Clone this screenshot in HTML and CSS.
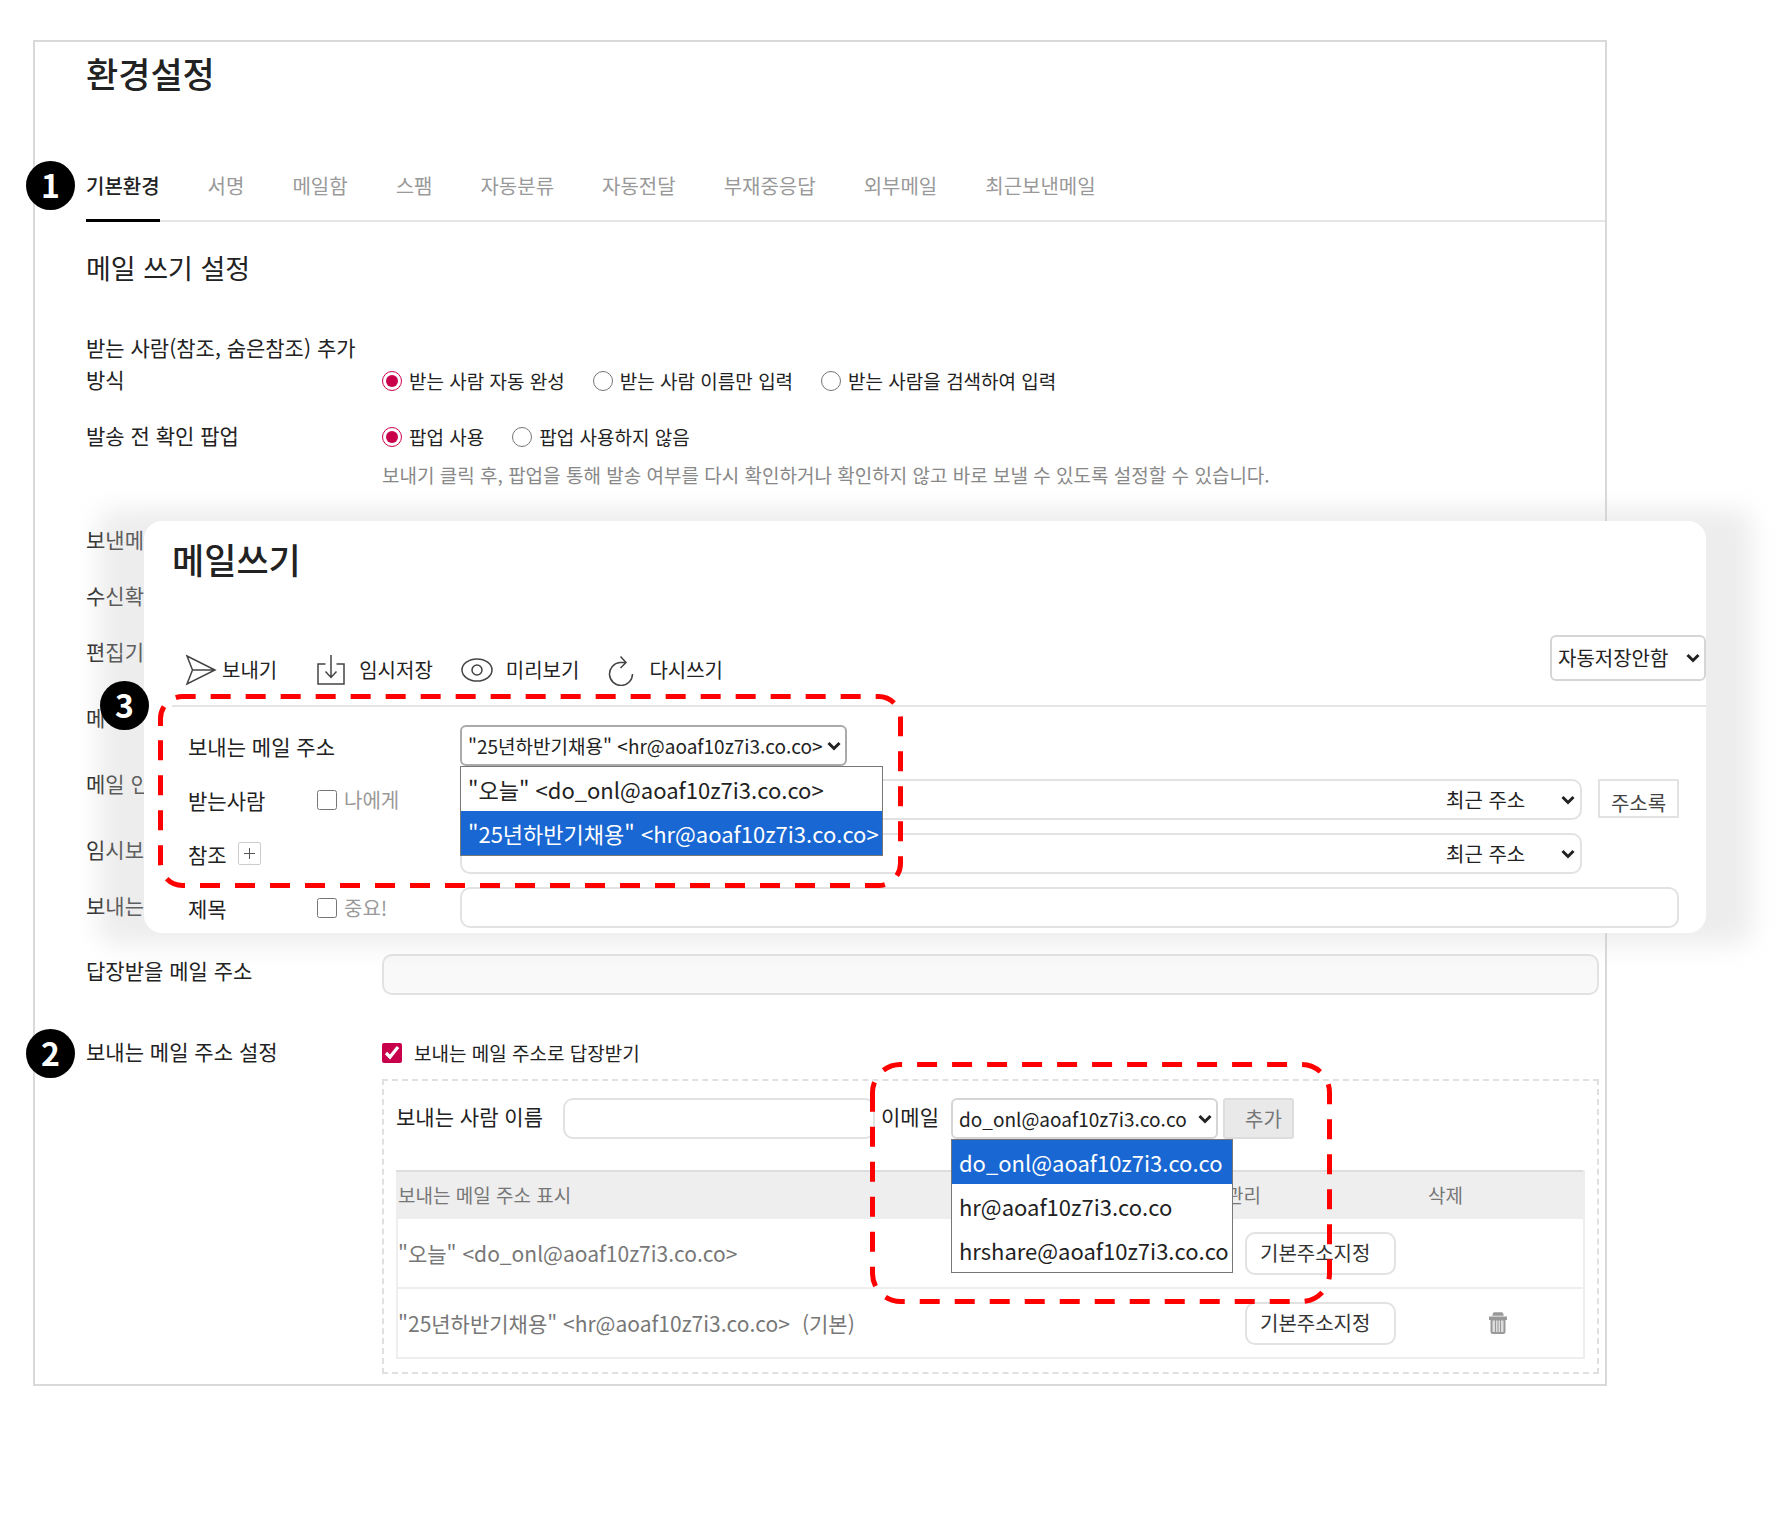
FILE: index.html
```html
<!DOCTYPE html>
<html lang="ko">
<head>
  <meta charset="UTF-8">
  <meta name="viewport" content="width=device-width, initial-scale=1.0">
  <title>환경설정</title>
  <link rel="stylesheet" href="styles.css">
</head>
<body>
  <main class="panel">
    <h1>환경설정</h1>

    <nav class="tabs">
      <span class="badge badge-tabs">1</span>
      <a href="#basic" class="active">기본환경</a>
      <a href="#sign">서명</a>
      <a href="#box">메일함</a>
      <a href="#spam">스팸</a>
      <a href="#filter">자동분류</a>
      <a href="#forward">자동전달</a>
      <a href="#absence">부재중응답</a>
      <a href="#external">외부메일</a>
      <a href="#recent">최근보낸메일</a>
    </nav>

    <section class="settings">
      <h2>메일 쓰기 설정</h2>

      <div class="row row-bottom">
        <div class="name">받는 사람(참조, 숨은참조) 추가 방식</div>
        <div class="options">
          <label><input type="radio" name="recipient" checked>받는 사람 자동 완성</label>
          <label><input type="radio" name="recipient">받는 사람 이름만 입력</label>
          <label><input type="radio" name="recipient">받는 사람을 검색하여 입력</label>
        </div>
      </div>
      <div class="row row-tall">
        <div class="name">발송 전 확인 팝업</div>
        <div>
          <div class="options">
            <label><input type="radio" name="popup" checked>팝업 사용</label>
            <label><input type="radio" name="popup">팝업 사용하지 않음</label>
          </div>
          <p class="help">보내기 클릭 후, 팝업을 통해 발송 여부를 다시 확인하거나 확인하지 않고 바로 보낼 수 있도록 설정할 수 있습니다.</p>
        </div>
      </div>
      <div class="row"><div class="name">보낸메</div></div>
      <div class="row"><div class="name">수신확</div></div>
      <div class="row row-tall"><div class="name">편집기</div></div>
      <div class="row row-tall"><div class="name">메</div></div>
      <div class="row row-tall"><div class="name">메일 인</div></div>
      <div class="row"><div class="name">임시보</div></div>
      <div class="row row-mid"><div class="name">보내는</div></div>
      <div class="row row-reply">
        <label class="name" for="reply">답장받을 메일 주소</label>
        <input class="field" id="reply" type="text" disabled>
      </div>

      <div class="row row-sender">
        <div class="name">보내는 메일 주소 설정</div>
        <div>
          <span class="badge badge-sender">2</span>
          <label class="check"><input type="checkbox" checked>보내는 메일 주소로 답장받기</label>
          <div class="sender">
            <div class="sender-form">
              <label for="sender-name">보내는 사람 이름</label>
              <input class="field" id="sender-name" type="text">
              <label for="sender-mail">이메일</label>
              <div class="select select-mail">
                <select id="sender-mail">
                  <option>do_onl@aoaf10z7i3.co.co</option>
                </select>
                <svg class="arrow" viewBox="0 0 14 10"><path d="M1.5 2 7 7.5 12.5 2"/></svg>
                <ul class="menu">
                  <li class="selected">do_onl@aoaf10z7i3.co.co</li>
                  <li>hr@aoaf10z7i3.co.co</li>
                  <li>hrshare@aoaf10z7i3.co.co</li>
                </ul>
              </div>
              <button type="button" class="add">추가</button>
            </div>
            <table>
              <thead>
                <tr><th>보내는 메일 주소 표시</th><th class="col-manage">관리</th><th class="col-delete">삭제</th></tr>
              </thead>
              <tbody>
                <tr>
                  <td>"오늘" &lt;do_onl@aoaf10z7i3.co.co&gt;</td>
                  <td class="manage"><button type="button" class="default">기본주소지정</button></td>
                  <td></td>
                </tr>
                <tr>
                  <td>"25년하반기채용" &lt;hr@aoaf10z7i3.co.co&gt;<span class="mark">(기본)</span></td>
                  <td class="manage"><button type="button" class="default">기본주소지정</button></td>
                  <td class="delete">
                    <button type="button" class="trash" aria-label="삭제">
                      <svg viewBox="0 0 18 22">
                        <path d="M4 3 5 1h8l1 2z" fill="#999" stroke="#999" stroke-width="1.5" stroke-linejoin="round"/>
                        <path d="M0 4.5h18v3.5H0z" fill="#999"/>
                        <path d="M2.5 7.5v12q0 1.5 1.5 1.5h10q1.5 0 1.5-1.5v-12z" fill="#ddd" stroke="#999" stroke-width="2"/>
                        <path d="M6.5 8v12M9 8v12M11.5 8v12" stroke="#999" stroke-width="1"/>
                      </svg>
                    </button>
                  </td>
                </tr>
              </tbody>
            </table>
          </div>
          <svg class="outline outline-sender" viewBox="0 0 462 242">
            <path d="M2.5 40V30.5a28 28 0 0 1 28-28H431.5a28 28 0 0 1 28 28V211.5a28 28 0 0 1-28 28H30.5a28 28 0 0 1-28-28V40"/>
          </svg>
        </div>
      </div>
    </section>
  </main>

  <section class="compose">
    <h2>메일쓰기</h2>
    <div class="toolbar">
      <button type="button" class="tool">
        <svg viewBox="0 0 32 32" width="32"><path d="M2 2 30 16 2 30 7.5 16zM7.5 16H30"/></svg>보내기
      </button>
      <button type="button" class="tool tool-save">
        <svg viewBox="0 0 28 32" width="28"><path d="M8.5 10H1v20h26V10h-7.5M14 1v22M8.5 17.5 14 23.5l5.5-6"/></svg>임시저장
      </button>
      <button type="button" class="tool tool-view">
        <svg viewBox="0 0 32 32" width="32"><ellipse cx="16" cy="16" rx="15" ry="11"/><circle cx="16" cy="16" r="5"/></svg>미리보기
      </button>
      <button type="button" class="tool tool-reset">
        <svg viewBox="0 0 26 32" width="26"><path d="M24.5 20A11.5 11.5 0 1 1 12 8.500H18M12.500 2.500l5.500 6L12.500 14"/></svg>다시쓰기
      </button>
      <div class="select select-save">
        <select aria-label="자동저장">
          <option>자동저장안함</option>
        </select>
        <svg class="arrow" viewBox="0 0 14 10"><path d="M1.5 2 7 7.5 12.5 2"/></svg>
      </div>
    </div>

    <div class="form">
      <div class="line">
        <label class="title title-wide" for="from">보내는 메일 주소</label>
        <div class="select select-from">
          <select id="from">
            <option>"25년하반기채용" &lt;hr@aoaf10z7i3.co.co&gt;</option>
          </select>
          <svg class="arrow" viewBox="0 0 14 10"><path d="M1.5 2 7 7.5 12.5 2"/></svg>
          <ul class="menu">
            <li>"오늘" &lt;do_onl@aoaf10z7i3.co.co&gt;</li>
            <li class="selected">"25년하반기채용" &lt;hr@aoaf10z7i3.co.co&gt;</li>
          </ul>
        </div>
      </div>
      <div class="line">
        <label class="title" for="to">받는사람</label>
        <label class="side"><input type="checkbox">나에게</label>
        <div class="field address">
          <input id="to" type="text">
          <div class="select select-recent">
            <select aria-label="받는사람 최근 주소"><option>최근 주소</option></select>
            <svg class="arrow" viewBox="0 0 14 10"><path d="M1.5 2 7 7.5 12.5 2"/></svg>
          </div>
        </div>
        <button type="button" class="book">주소록</button>
      </div>
      <div class="line">
        <div class="title title-wide">
          <label for="cc">참조</label>
          <button type="button" class="plus" aria-label="숨은참조 열기"><svg viewBox="0 0 13 13"><path d="M6.5 1v11M1 6.5h11"/></svg></button>
        </div>
        <div class="field address address-cc">
          <input id="cc" type="text">
          <div class="select select-recent">
            <select aria-label="참조 최근 주소"><option>최근 주소</option></select>
            <svg class="arrow" viewBox="0 0 14 10"><path d="M1.5 2 7 7.5 12.5 2"/></svg>
          </div>
        </div>
      </div>
      <div class="line">
        <label class="title" for="subject">제목</label>
        <label class="side"><input type="checkbox">중요!</label>
        <input class="field" id="subject" type="text">
      </div>
    </div>

    <svg class="outline outline-from" viewBox="0 0 745 194">
      <path d="M2.5 32V24.5a22 22 0 0 1 22-22H720.5a22 22 0 0 1 22 22V169.5a22 22 0 0 1-22 22H24.5a22 22 0 0 1-22-22V32"/>
    </svg>
    <span class="badge badge-from">3</span>
  </section>
</body>
</html>
```

FILE: styles.css
```css
* {
  box-sizing: border-box;
}

body {
  position: relative;
  margin: 0;
  padding: 40px 178px 40px 33px;
  background: #fff;
  color: #222;
  font-family: 'Noto Sans CJK KR', 'Noto Sans', sans-serif;
  font-size: 20px;
  line-height: 32px;
}

h1, h2, p, ul {
  margin: 0;
  padding: 0;
}

button, input, select {
  font: inherit;
  color: inherit;
  margin: 0;
}

button {
  padding: 0;
  background: none;
  border: none;
}

.panel {
  border: 2px solid #d9d9d9;
  padding: 11px 0 10px 51px;
}

.panel h1, .compose h2 {
  font-size: 35px;
  font-weight: 500;
  line-height: 40px;
}

/* Tabs */
.tabs {
  position: relative;
  display: flex;
  gap: 48px;
  margin-top: 77px;
  border-bottom: 2px solid #e5e5e5;
}

.tabs a {
  padding-bottom: 17px;
  margin-bottom: -2px;
  border-bottom: 3px solid transparent;
  color: #999;
  text-decoration: none;
}

.tabs a.active {
  color: #222;
  border-color: #000;
  font-weight: 500;
}

/* Settings rows */
.settings {
  padding-right: 6px;
}

.settings h2 {
  margin: 26px 0 45px;
  font-size: 27px;
  line-height: 40px;
  font-weight: 400;
}

.row {
  display: grid;
  grid-template-columns: 270px 1fr;
  column-gap: 26px;
  margin-bottom: 24px;
}

.row-bottom {
  align-items: end;
}

.row-tall {
  margin-bottom: 34px;
}

.row-mid {
  margin-bottom: 31px;
}

.row-reply {
  margin-bottom: 42px;
}

.row-sender {
  position: relative;
  margin-bottom: 0;
}

.name, .sender-form label, .title {
  font-size: 21px;
}

.name {
  margin: -2px 0 2px;
}

.row-reply .name {
  margin: 0;
}

.options {
  display: flex;
  gap: 28px;
  font-size: 19px;
}

.options label, .check, .side {
  display: flex;
  align-items: center;
  gap: 7px;
}

input[type="radio"], input[type="checkbox"] {
  width: 20px;
  height: 20px;
  accent-color: #c8004c;
}

.check {
  gap: 12px;
  font-size: 19px;
}

.help {
  margin-top: 6px;
  color: #888;
  font-size: 19px;
}

.field {
  width: 100%;
  height: 41px;
  border: 2px solid #e2e2e2;
  border-radius: 10px;
  background: #fff;
}

.field:disabled {
  background: #f9f9f9;
}

/* Selects */
.select {
  position: relative;
}

.select select {
  display: block;
  width: 100%;
  height: 41px;
  padding: 0 6px;
  appearance: none;
  border: 2px solid #d5d5d5;
  border-radius: 6px;
  background: #fff;
}

.arrow {
  position: absolute;
  right: 6px;
  top: 50%;
  width: 14px;
  height: 10px;
  margin-top: -5px;
  fill: none;
  stroke: #222;
  stroke-width: 3;
  pointer-events: none;
}

.menu {
  position: absolute;
  z-index: 2;
  top: 100%;
  left: 0;
  list-style: none;
  border: 1px solid #777;
  background: #fff;
  font-size: 22px;
  line-height: 44px;
  white-space: nowrap;
}

.menu li {
  padding: 0 3px 0 7px;
}

.menu .selected {
  background: #1967d2;
  color: #fff;
}

/* Sender address box */
.sender {
  margin-top: 10px;
  padding: 17px 12px 13px;
  border: 2px dashed #e0e0e0;
}

.sender-form {
  display: flex;
  align-items: center;
  margin-bottom: 31px;
}

.sender-form label {
  margin-bottom: 6px;
}

.sender-form .field {
  width: 312px;
  margin: 0 6px 0 20px;
}

.select-mail {
  width: 267px;
  margin: 0 5px 0 12px;
}

.select-mail select, .select-from select {
  font-size: 19px;
}

.add {
  width: 71px;
  height: 41px;
  padding-left: 10px;
  border: 2px solid #ddd;
  border-radius: 3px;
  background: #e9e9e9;
  color: #777;
}

table {
  width: 100%;
  table-layout: fixed;
  border-collapse: collapse;
  border: 2px solid #eee;
  border-top-color: #ddd;
}

th {
  height: 47px;
  padding: 0;
  background: #eee;
  color: #777;
  font-size: 19px;
  font-weight: 400;
  text-align: left;
}

.col-manage {
  width: 202px;
}

.col-delete {
  width: 156px;
}

td {
  height: 70px;
  padding: 0;
  border-top: 2px solid #eee;
  color: #777;
  font-size: 21px;
}

.mark {
  margin-left: 12px;
}

.manage {
  padding-left: 19px;
}

.default {
  display: block;
  width: 151px;
  height: 43px;
  padding-left: 13px;
  border: 2px solid #e2e2e2;
  border-radius: 10px;
  background: #fff;
  color: #333;
  font-size: 20px;
  text-align: left;
}

.delete {
  padding-left: 61px;
}

.trash {
  display: block;
  width: 18px;
  height: 22px;
}

.trash svg {
  display: block;
}

/* Compose window */
.compose {
  position: absolute;
  z-index: 1;
  top: 521px;
  left: 144px;
  right: 79px;
  padding: 18px 0 5px 28px;
  border-radius: 18px;
}

.compose::before {
  content: "";
  position: absolute;
  z-index: -1;
  inset: -12px -46px;
  border-radius: 18px;
  background: rgba(205, 205, 205, 0.36);
  filter: blur(12px);
}

.compose::after {
  content: "";
  position: absolute;
  z-index: -1;
  inset: 0;
  border-radius: 18px;
  background: #fff;
}

.toolbar {
  display: flex;
  align-items: flex-end;
  margin-top: 56px;
  padding-bottom: 19px;
  border-bottom: 2px solid #e5e5e5;
}

.tool {
  display: flex;
  align-items: center;
  gap: 5px;
  margin-left: 13px;
}

.tool svg {
  fill: none;
  stroke: #444;
  stroke-width: 1.5;
}

.tool-save {
  gap: 14px;
  margin-left: 40px;
}

.tool-view {
  gap: 13px;
  margin-left: 28px;
}

.tool-reset {
  gap: 15px;
  margin-left: 29px;
}

.select-save {
  width: 156px;
  margin: 0 0 5px auto;
}

.select-save select {
  height: 46px;
}

.form {
  display: grid;
  gap: 13px;
  padding: 18px 27px 0 16px;
}

.line {
  display: flex;
  align-items: center;
}

.title {
  flex: 0 0 129px;
}

.title-wide {
  display: flex;
  align-items: center;
  gap: 11px;
  flex-basis: 272px;
}

.side {
  flex: 0 0 143px;
  color: #999;
}

.select-from {
  width: 387px;
}

.select-from select {
  border-color: #aaa;
}

.address {
  display: flex;
}

.address input {
  flex: 1;
  min-width: 0;
  border: none;
  background: none;
}

.address-cc {
  margin-right: 97px;
}

.select-recent {
  width: 140px;
}

.select-recent select {
  height: 37px;
  border: none;
  background: none;
}

.select-recent .arrow {
  right: 5px;
}

.book {
  flex: 0 0 81px;
  height: 39px;
  margin: 0 0 2px 16px;
  padding-top: 6px;
  border: 2px solid #e2e2e2;
  color: #444;
}

.plus {
  display: flex;
  align-items: center;
  justify-content: center;
  width: 23px;
  height: 23px;
  border: 1px solid #ccc;
  border-radius: 2px;
}

.plus svg {
  width: 13px;
  stroke: #555;
}

/* Numbered callouts */
.badge {
  position: absolute;
  width: 49px;
  height: 49px;
  border-radius: 50%;
  background: #000;
  color: #fff;
  font-size: 32px;
  font-weight: 700;
  line-height: 47px;
  text-align: center;
}

.badge-tabs {
  left: -60px;
  top: -9px;
}

.badge-sender {
  left: -60px;
  top: -8px;
}

.badge-from {
  left: -44px;
  top: 160px;
}

.outline {
  position: absolute;
  z-index: 3;
  fill: none;
  stroke: #f00;
  stroke-width: 5;
  stroke-dasharray: 20 15;
  pointer-events: none;
}

.outline-sender {
  left: 784px;
  top: 25px;
  width: 462px;
  height: 242px;
}

.outline-from {
  left: 14px;
  top: 173px;
  width: 745px;
  height: 194px;
}
```
